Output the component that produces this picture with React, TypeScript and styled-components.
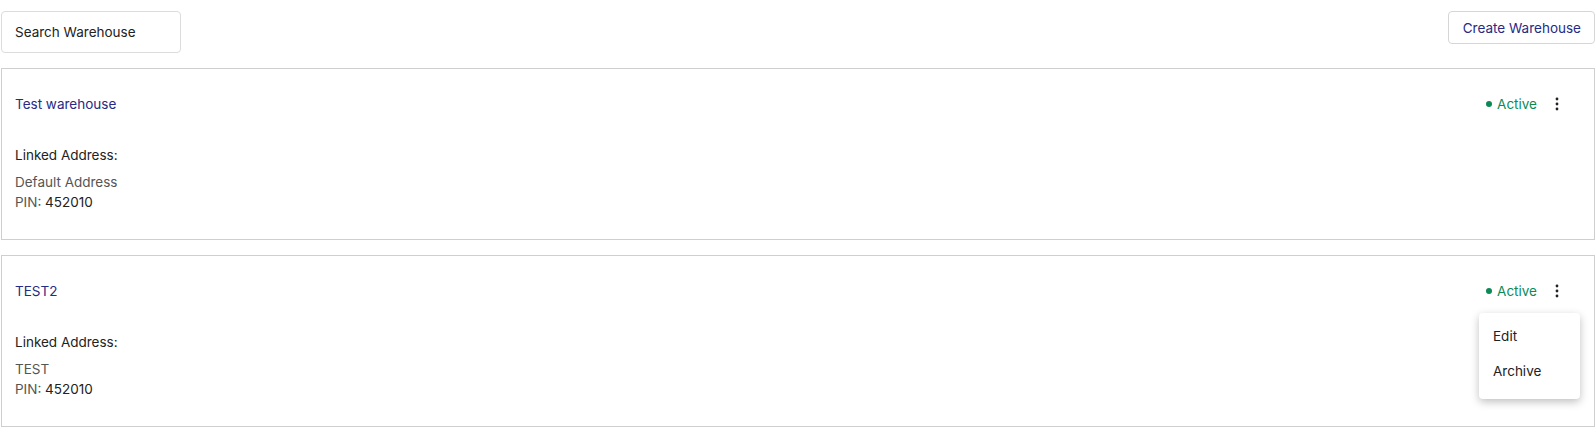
import React from 'react'
import styled, { createGlobalStyle } from 'styled-components'

const GlobalStyle = createGlobalStyle`
  html, body {
    margin: 0;
    overflow: hidden;
  }
  body {
    background: #fff;
    font-family: Inter, "Noto Sans", sans-serif;
    font-size: 13.5px;
    color: #222;
  }
`

interface Warehouse {
  name: string
  address: string
  pin: string
  menuOpen?: boolean
}

const warehouses: Warehouse[] = [
  { name: 'Test warehouse', address: 'Default Address', pin: '452010' },
  { name: 'TEST2', address: 'TEST', pin: '452010', menuOpen: true },
]

const Kebab = () => (
  <svg width="4" height="14" viewBox="0 0 4 14">
    <circle cx="2" cy="2" r="1.4" fill="#222" />
    <circle cx="2" cy="7" r="1.4" fill="#222" />
    <circle cx="2" cy="12" r="1.4" fill="#222" />
  </svg>
)

const WarehouseCard: React.FC<{ warehouse: Warehouse }> = ({ warehouse }) => (
  <Card>
    <CardHeader>
      <Title>{warehouse.name}</Title>
      <Actions>
        <Status>
          <Dot />
          Active
        </Status>
        <MenuWrap>
          <KebabButton>
            <Kebab />
          </KebabButton>
          {warehouse.menuOpen && (
            <Menu>
              <MenuItem>Edit</MenuItem>
              <MenuItem>Archive</MenuItem>
            </Menu>
          )}
        </MenuWrap>
      </Actions>
    </CardHeader>
    <Label>Linked Address:</Label>
    <AddressBlock>
      <div>{warehouse.address}</div>
      <div>
        PIN: <PinValue>{warehouse.pin}</PinValue>
      </div>
    </AddressBlock>
  </Card>
)

const App: React.FC = () => (
  <>
    <GlobalStyle />
    <Page>
      <Toolbar>
        <SearchBox placeholder="Search Warehouse" />
        <CreateButton>Create Warehouse</CreateButton>
      </Toolbar>
      <List>
        {warehouses.map((w) => (
          <WarehouseCard key={w.name} warehouse={w} />
        ))}
      </List>
    </Page>
  </>
)

const Page = styled.div`
  box-sizing: border-box;
  height: 100vh;
  overflow: hidden;
  padding: 11px 1px 0 1px;
`

const Toolbar = styled.div`
  display: flex;
  justify-content: space-between;
  align-items: flex-start;
  margin-bottom: 15px;
`

const SearchBox = styled.input`
  box-sizing: border-box;
  width: 180px;
  height: 42px;
  padding: 0 13px;
  border: 1px solid #dcdcdc;
  border-radius: 4px;
  font-family: inherit;
  font-size: 13.5px;
  outline: none;

  &::placeholder {
    color: #222;
  }
`

const CreateButton = styled.button`
  box-sizing: border-box;
  height: 33px;
  padding: 0 13px 0 14px;
  background: #fff;
  border: 1px solid #d6d6d6;
  border-radius: 4px;
  color: #262b85;
  font-family: inherit;
  font-size: 13.5px;
  cursor: pointer;
`

const List = styled.div`
  display: flex;
  flex-direction: column;
  gap: 15px;
`

const Card = styled.div`
  box-sizing: border-box;
  flex-shrink: 0;
  height: 172px;
  padding: 25px 25px 0 13px;
  border: 1px solid #cfcfcf;
`

const CardHeader = styled.div`
  display: flex;
  justify-content: space-between;
  align-items: center;
  height: 20px;
  margin-bottom: 31px;
`

const Title = styled.div`
  color: #262b85;
`

const Actions = styled.div`
  display: flex;
  align-items: center;
  gap: 8px;
`

const Status = styled.span`
  display: flex;
  align-items: center;
  gap: 5px;
  color: #0b8a57;
`

const Dot = styled.span`
  width: 6px;
  height: 6px;
  border-radius: 50%;
  background: #0b8a57;
`

const MenuWrap = styled.div`
  position: relative;
  display: flex;
`

const KebabButton = styled.button`
  display: flex;
  align-items: center;
  justify-content: center;
  width: 24px;
  height: 20px;
  padding: 0;
  border: none;
  background: none;
  cursor: pointer;
`

const Menu = styled.div`
  position: absolute;
  top: 32px;
  right: -11px;
  width: 101px;
  padding: 5px 0 11px;
  background: #fff;
  border-radius: 4px;
  box-shadow: 0 3px 8px rgba(0, 0, 0, 0.25);
  z-index: 10;
`

const MenuItem = styled.div`
  height: 35px;
  display: flex;
  align-items: center;
  padding: 0 14px;
  color: #222;
`

const Label = styled.div`
  line-height: 20px;
  margin-bottom: 7px;
`

const AddressBlock = styled.div`
  line-height: 20px;
  color: #555;
`

const PinValue = styled.span`
  color: #222;
`

export default App
